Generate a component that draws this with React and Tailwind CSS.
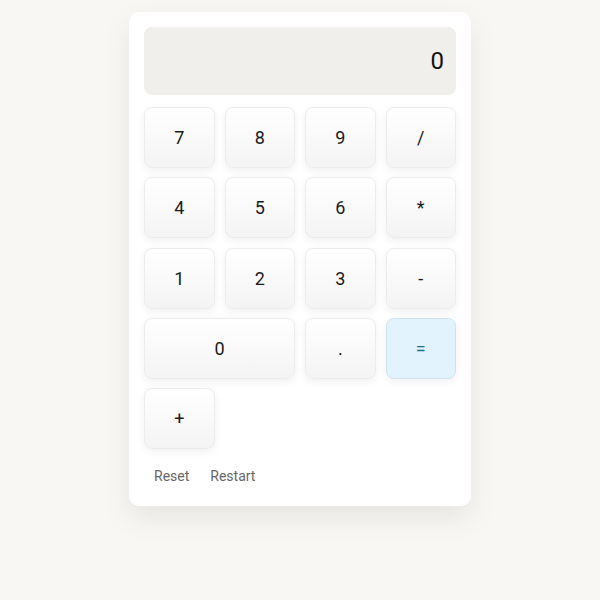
import React, { useState } from "react";

const KEYS = [
  ["7", "8", "9", "/"],
  ["4", "5", "6", "*"],
  ["1", "2", "3", "-"],
];

const Key = ({ label, onPress, wide = false, accent = false }) => (
  <button
    onClick={() => onPress(label)}
    className={
      "h-[61px] rounded-lg border text-[18px] shadow-[0_3px_8px_rgba(0,0,0,0.06)] " +
      (wide ? "col-span-2 " : "") +
      (accent
        ? "border-[#cfe3ee] bg-[#e3f3fd] text-[#1f6f86]"
        : "border-[#ececec] bg-gradient-to-b from-white to-[#f4f4f4] text-[#1a1a1a]")
    }
  >
    {label}
  </button>
);

const App = () => {
  const [display, setDisplay] = useState("0");

  const press = (k) => {
    if (k === "=") {
      try {
        // eslint-disable-next-line no-new-func
        setDisplay(String(Function(`return (${display})`)()));
      } catch {
        setDisplay("0");
      }
      return;
    }
    setDisplay((d) => (d === "0" && k !== "." ? k : d + k));
  };

  return (
    <div className="min-h-screen bg-[#f8f7f3] pt-3 font-['Roboto',sans-serif]">
      <div className="mx-auto w-[342px] rounded-[10px] bg-white px-[15px] pt-[15px] pb-[14px] shadow-[0_12px_30px_rgba(0,0,0,0.08)]">
        <div className="flex h-[68px] items-center justify-end rounded-lg bg-[#f1efeb] px-3 text-[24px] text-[#111]">
          {display}
        </div>

        <div className="mt-3 grid grid-cols-4 gap-x-[10px] gap-y-[9.3px]">
          {KEYS.flat().map((k) => (
            <Key key={k} label={k} onPress={press} />
          ))}
          <Key label="0" onPress={press} wide />
          <Key label="." onPress={press} />
          <Key label="=" onPress={press} accent />
          <Key label="+" onPress={press} />
        </div>

        <div className="mt-[11px] flex gap-px">
          <button
            className="px-[10px] py-1.5 text-sm text-[#666]"
            onClick={() => setDisplay("0")}
          >
            Reset
          </button>
          <button
            className="px-[10px] py-1.5 text-sm text-[#666]"
            onClick={() => setDisplay("0")}
          >
            Restart
          </button>
        </div>
      </div>
    </div>
  );
};

export default App;
